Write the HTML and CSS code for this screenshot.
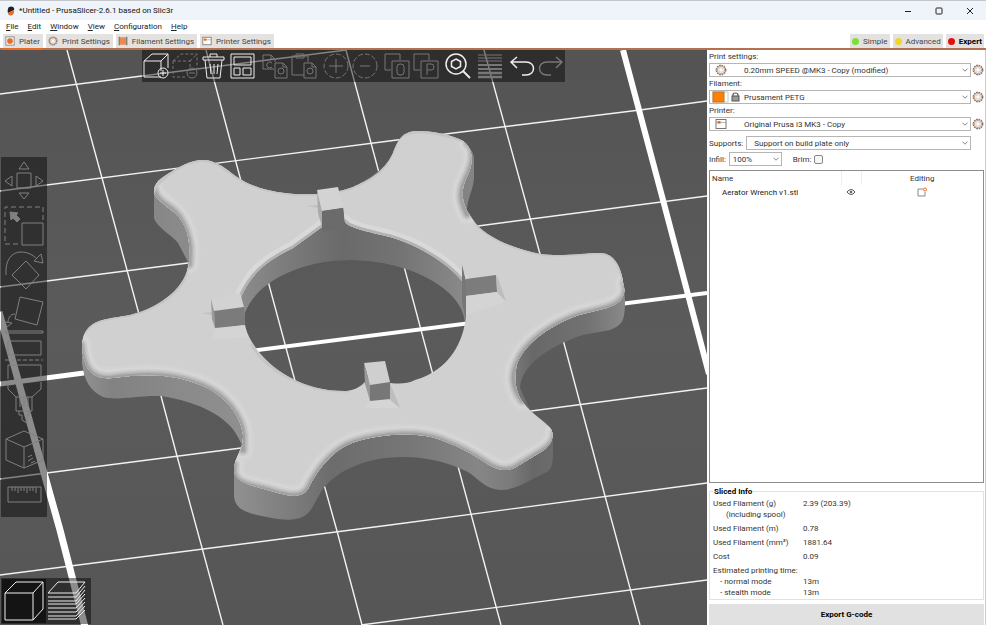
FILE: index.html
```
<!DOCTYPE html>
<html lang="en">
<head>
  <meta charset="UTF-8" />
  <meta name="viewport" content="width=device-width, initial-scale=1" />
  <title>*Untitled - PrusaSlicer-2.6.1 based on Slic3r</title>
  <link rel="stylesheet" href="styles.css">
</head>
<body>

  <!-- shared icons -->
  <svg class="defs" width="0" height="0" aria-hidden="true">
    <symbol id="gear" viewBox="0 0 12 12">
      <circle cx="6" cy="6" r="4.6" fill="none" stroke="#777" stroke-width="1.6" stroke-dasharray="1.7 .7" />
      <circle cx="6" cy="6" r="3.6" fill="#fff" stroke="#d39b74" stroke-width=".9" />
      <circle cx="6" cy="6" r="2.1" fill="#fff" stroke="#aaa" stroke-width=".5" />
    </symbol>
    <symbol id="printer" viewBox="0 0 12 12">
      <rect x="1" y="1.5" width="10" height="9" fill="#fff" stroke="#777" />
      <path d="M1 4.5H11" stroke="#999" stroke-width=".7" />
      <rect x="2.5" y="3" width="3" height="2.6" fill="#ed6b21" />
    </symbol>
    <symbol id="chevron" viewBox="0 0 6 4">
      <path d="M.5 .7L3 3.2L5.500 .7" fill="none" stroke="#666" stroke-width=".8" />
    </symbol>
  </svg>

  <header class="titlebar">
    <svg class="logo" viewBox="0 0 8 10"><path d="M2 1C5-.5 8 1 7 4L1 7C.5 5 .5 2.500 2 1Z" fill="#222" /><path d="M1 7L7 4C7.500 7 6 9.500 3.500 9.500C2 9.500 1 8.500 1 7Z" fill="#ed6b21" /></svg>
    <span class="caption">*Untitled - PrusaSlicer-2.6.1 based on Slic3r</span>
    <div class="window-buttons">
      <button aria-label="Minimize"><svg viewBox="0 0 8 8"><path d="M1 4.500H7" /></svg></button>
      <button aria-label="Maximize"><svg viewBox="0 0 8 8"><rect x="1" y="1" width="6" height="6" rx=".7" /></svg></button>
      <button aria-label="Close"><svg viewBox="0 0 8 8"><path d="M1 1L7 7M7 1L1 7" /></svg></button>
    </div>
  </header>

  <nav class="menu">
    <a href="#"><u>F</u>ile</a>
    <a href="#"><u>E</u>dit</a>
    <a href="#"><u>W</u>indow</a>
    <a href="#"><u>V</u>iew</a>
    <a href="#"><u>C</u>onfiguration</a>
    <a href="#"><u>H</u>elp</a>
  </nav>

  <div class="tabs">
    <button class="tab active">
      <svg viewBox="0 0 12 12"><rect x="1" y="1" width="10" height="10" fill="#eee" stroke="#888" /><circle cx="6" cy="6" r="3.400" fill="#ed6b21" /></svg>
      Plater
    </button>
    <button class="tab"><svg><use href="#gear" /></svg>Print Settings</button>
    <button class="tab">
      <svg viewBox="0 0 12 12"><rect x="2" y="1.500" width="8" height="9" fill="#ed8a50" /><path d="M1.500 1V11M10.500 1V11" stroke="#777" stroke-width="1.500" /></svg>
      Filament Settings
    </button>
    <button class="tab"><svg><use href="#printer" /></svg>Printer Settings</button>
    <div class="modes">
      <button class="tab"><i class="dot green"></i>Simple</button>
      <button class="tab"><i class="dot yellow"></i>Advanced</button>
      <button class="tab current"><i class="dot red"></i>Expert</button>
    </div>
  </div>

  <main>
    <section class="viewport">
      <svg class="scene" viewBox="0 50 707 575" preserveAspectRatio="xMinYMin slice">
        <defs>
          <linearGradient id="bed" x1="0" y1="0" x2="0" y2="1">
            <stop offset="0" stop-color="#545454" /><stop offset=".5" stop-color="#5b5b5b" /><stop offset="1" stop-color="#565656" />
          </linearGradient>
          <linearGradient id="side" gradientUnits="userSpaceOnUse" x1="80" y1="0" x2="626" y2="0">
            <stop offset="0" stop-color="#929292" /><stop offset=".06" stop-color="#828282" />
            <stop offset=".18" stop-color="#8a8a8a" /><stop offset=".29" stop-color="#8f8f8f" />
            <stop offset=".4" stop-color="#7a7a7a" /><stop offset=".46" stop-color="#6c6c6c" />
            <stop offset=".6" stop-color="#767676" /><stop offset=".73" stop-color="#868686" />
            <stop offset=".79" stop-color="#7a7a7a" /><stop offset=".83" stop-color="#686868" />
            <stop offset=".93" stop-color="#727272" /><stop offset="1" stop-color="#8a8a8a" />
          </linearGradient>
          <linearGradient id="bore" gradientUnits="userSpaceOnUse" x1="240" y1="0" x2="466" y2="0">
            <stop offset="0" stop-color="#8c8c8c" /><stop offset=".2" stop-color="#7c7c7c" />
            <stop offset=".45" stop-color="#6a6a6a" /><stop offset=".7" stop-color="#737373" />
            <stop offset="1" stop-color="#8a8a8a" />
          </linearGradient>
          <clipPath id="topClip">
            <path clip-rule="evenodd" d="M200 160C185 162 174 170 163 177C153 184 152 193 157 198C167 208 178 213 183 223C190 236 190 249 189 262C187 286 162 307 130 315C108 319 94 319 86 331C80 340 82 358 87 367C92 376 100 379 112 378C148 373 175 374 203 386C226 396 241 416 243 435C244 450 234 457 234 470C234 480 248 485 260 488C280 493 299 502 308 489C318 468 335 448 355 442C382 433 420 432 441 440C462 448 474 455 486 463C498 471 507 472 516 467L541 452C553 445 555 434 550 428C543 420 537 417 530 410C516 398 513 382 517 364C525 342 553 324 579 315L607 308C622 303 627 295 623 283C621 265 613 253 600 253C584 253 562 257 540 254C512 248 489 238 477 225C463 209 459 195 466 179C474 164 474 149 463 141C450 134 432 131 417 131C402 131 397 142 393 153C384 173 366 181 353 187C333 195 293 198 260 188C235 180 226 166 217 164C211 160 206 160 200 160ZM322 227L293 248C266 261 251 274 241 297L245 327C256 360 295 392 347 391C355 390 362 386 366 381L390 383C400 384 407 384 415 380C450 370 464 341 466 315L465 280L462 281C448 264 421 246 390 237C375 233 350 229 345 222L343 207L322 211Z" />
          </clipPath>
          <!-- lower rims, stroked several times to round the edge -->
          <g id="rims">
            <path d="M154 190C155 198 163 203 170 208C178 213 183 223 186 231C190 243 190 249 189 264" />
            <path d="M81 345C83 370 93 380 112 378C148 373 175 374 203 386C226 396 241 416 243 435V450" />
            <path d="M234 465C230 483 248 485 260 488C280 493 299 502 308 489C318 468 335 448 355 442C382 433 420 432 441 440C462 448 474 455 486 463C498 471 507 472 516 467L541 452C553 445 555 438 555 433" />
            <path d="M522 400C513 388 512 375 517 364C525 342 553 324 579 315L607 308C622 303 629 295 625 283" />
            <path d="M467 214C460 199 460 192 466 179C474 164 476 149 468 143" />
          </g>
        </defs>

        <rect y="50" width="707" height="575" fill="url(#bed)" />

        <!-- print bed grid -->
        <g class="grid">
          <path d="M67 50L102 178L149 351L177 456L223 625" />
          <path d="M206 50L241 181L292 370L337 531L362 625" />
          <path d="M346 50L378 169L432 371L471 514L501 625" />
          <path d="M484 50L540 254L605 496L640 625" />
          <path d="M0 94L346 50" />
          <path d="M0 191L397 140L640 110L707 101" />
          <path d="M0 287L188 263L478 226L707 196" />
          <path d="M0 479L241 448L531 411L707 388" />
          <path d="M0 575L390 525L707 483" />
          <path d="M361 625L707 580" />
        </g>
        <g class="grid-major">
          <path d="M0 384L84 373" stroke-width="5" />
          <path d="M250 351L707 293" stroke-width="4" />
          <path d="M623 50L663 200L709 374" stroke-width="6" />
          <path d="M-1 312L60 530L85 627" stroke-width="7" />
        </g>

        <!-- side walls -->
        <path fill="url(#side)" fill-rule="evenodd" d="M200 160C185 162 174 170 163 177C156 181 154 186 154 194V218C156 227 172 235 178 243L188 262C188 288 162 307 130 315C108 319 94 319 86 331C81 337 82 346 82 363C84 380 90 391 103 397C118 401 138 395 160 396C182 399 210 407 227 423C237 432 239 440 243 447L234 470V497C236 511 250 514 267 517C290 522 304 521 312 508L322 490C335 473 362 457 403 457C431 457 451 464 468 472C481 481 486 489 500 490C515 491 533 478 547 472C554 467 553 460 553 433C550 422 538 419 530 410L520 388C521 364 553 344 583 335L610 330C623 325 625 320 625 300C624 270 616 253 600 253C584 253 562 257 540 254C512 248 489 238 477 225L467 210C467 199 474 188 474 177V158C473 145 456 137 440 134C428 131 404 129 400 138C393 153 390 169 353 187C333 195 293 198 260 188C235 180 226 166 217 164C211 160 206 160 200 160ZM245 312C260 276 310 259 353 260C412 261 462 290 465 321C472 350 450 375 432 380C417 388 400 392 366 391C362 393 355 396 347 396C280 396 240 360 245 312Z" />

        <!-- inside of the bore -->
        <path fill="url(#bore)" d="M322 200L343 200L347 225L390 235L440 260L466 280L465 321C462 290 412 261 353 260C310 259 260 276 245 312L239 297L267 255L310 230Z" />

        <!-- top face with rounded rim -->
        <g clip-path="url(#topClip)">
          <rect x="78" y="125" width="550" height="380" fill="#d0d0d0" />
          <g class="rim">
            <use class="rim-1" href="#rims" />
            <use class="rim-2" href="#rims" />
            <use class="rim-3" href="#rims" />
            <use class="rim-4" href="#rims" />
            <use class="rim-5" href="#rims" />
            <use class="rim-6" href="#rims" />
          </g>
          <path class="bore-rim" d="M345 222C350 229 375 233 390 237C421 246 448 264 462 281M322 227L293 248C266 261 251 274 241 297" />
          <path class="bore-edge" d="M345 222C350 229 375 233 390 237C421 246 448 264 462 281M322 227L293 248C266 261 251 274 241 297" />
          <path class="bore-far" d="M252 345C265 370 305 392 347 391L366 381" />
          <path class="upper-edge" d="M188 262C188 288 162 307 130 315C108 319 94 319 86 331M154 192C154 184 174 170 185 164L200 160C224 160 225 177 260 188C293 198 333 195 353 187C384 175 389 162 397 142C404 126 438 132 463 141M477 225C489 238 512 248 540 254C562 257 584 253 600 253C613 253 621 265 623 283" />
        </g>

        <!-- keys round the bore -->
        <path d="M306 206L318 208V205ZM201 313L212 315V312Z" fill="#c2c2c2" />
        <path d="M317 190L322 210V227L318 213Z" fill="#aaa" />
        <path d="M317 190L338 187L343 208L322 211Z" fill="#d3d3d3" />
        <path d="M322 211L343 208L344 228L322 232Z" fill="#6b6b6b" />
        <path d="M211 299L240 293L244 307L214 311Z" fill="#d2d2d2" />
        <path d="M211 299L214 311L215 328L212 319Z" fill="#999" />
        <path d="M214 311L244 307L245 325L215 328Z" fill="#7b7b7b" />
        <path d="M215 329L245 325L248 337L212 340Z" fill="#d4d4d4" />
        <path d="M462 265L466 281V321L462 303Z" fill="#777" />
        <path d="M466 279L496 275L497 292L466 296Z" fill="#7c7c7c" />
        <path d="M497 275L506 301L497 293Z" fill="#bdbdbd" />
        <path d="M466 296L497 292L505 302L466 315Z" fill="#d4d4d4" />
        <path d="M365 381L370 402L364 408L400 408L390 397V382L366 379Z" fill="#d5d5d5" />
        <path d="M390 383L400 408L389 399Z" fill="#bdbdbd" />
        <path d="M364 363L385 361L390 382L370 385Z" fill="#cfcfcf" />
        <path d="M364 363L370 385V401L365 384Z" fill="#999" />
        <path d="M370 385L390 382V399L370 401Z" fill="#777" />
      </svg>

      <div class="toolbar">
        <div class="group">
          <button aria-label="Add"><svg viewBox="0 0 26 26"><path d="M1 8V24H18M1 8H18V18M1 8L9 1H25V15M18 8L25 1" /><circle cx="20" cy="20" r="5" /><path d="M20 17V23M17 20H23" /></svg></button>
          <button aria-label="Delete" disabled><svg viewBox="0 0 26 26"><path stroke-dasharray="3 2" d="M1 8V24H15M1 8H18V15M1 8L9 1H25V15M18 8L25 1" /><circle cx="20" cy="20" r="5" /><path d="M17 20H23" /></svg></button>
          <button aria-label="Delete all"><svg viewBox="0 0 26 26"><path d="M2 4H23V7H2ZM9 4V1H16V4M4 7L6 25H19L21 7M9 11L10 21M13 11V21M17 11L16 21" /></svg></button>
          <button aria-label="Arrange"><svg viewBox="0 0 26 26"><path d="M1 1H24V25H1ZM4 4H21V12H4ZM4 15H10V22H4ZM13 15H21V22H13Z" /></svg></button>
        </div>
        <div class="group">
          <button aria-label="Copy" disabled><svg viewBox="0 0 26 26"><path d="M12 16H1V2H9L13 6V9M9 2V6H13M13 10H21L25 14V25H13ZM21 10V14H25" /><circle cx="19" cy="18" r="3" /><path d="M10 10A3 3 0 1 0 10 14" /></svg></button>
          <button aria-label="Paste" disabled><svg viewBox="0 0 26 26"><path d="M13 22H1V3H17V9M5 3V1H13V5H5ZM13 10H21L25 14V25H13ZM21 10V14H25" /><circle cx="19" cy="18" r="3" /></svg></button>
        </div>
        <div class="group">
          <button aria-label="Add instance" disabled><svg viewBox="0 0 26 26"><circle cx="13" cy="13" r="12" stroke-dasharray="5 2" /><path d="M13 6V20M6 13H20" /></svg></button>
          <button aria-label="Remove instance" disabled><svg viewBox="0 0 26 26"><circle cx="13" cy="13" r="12" stroke-dasharray="5 2" /><path d="M8 13H18" /></svg></button>
        </div>
        <div class="group">
          <button aria-label="Split to objects" disabled><svg viewBox="0 0 26 26"><path d="M7 17H1V1H16V7M8 8H25V25H8Z" /><rect x="13" y="11" width="7" height="11" rx="3" /></svg></button>
          <button aria-label="Split to parts" disabled><svg viewBox="0 0 26 26"><path d="M7 17H1V1H16V7M8 8H25V25H8ZM14 22V11H18Q21 11 21 14T18 17H14" /></svg></button>
        </div>
        <div class="group">
          <button aria-label="Search"><svg viewBox="0 0 26 26"><circle cx="11" cy="11" r="10" stroke-width="1.500" /><path d="M11 6L15.500 8.500V13.500L11 16L6.500 13.500V8.500Z" stroke-width="1.500" /><path d="M18 18L25 25" stroke-width="2" /></svg></button>
        </div>
        <div class="group">
          <button aria-label="Variable layer height" disabled><svg viewBox="0 0 26 26"><path d="M1 2H25M1 5H25M1 8H25" /><path d="M1 12H25M1 16H25" stroke-width="2" /><path d="M1 20H25M1 24H25" stroke-width="2.500" /></svg></button>
        </div>
        <div class="group">
          <button aria-label="Undo"><svg viewBox="0 0 26 26"><path stroke-width="1.500" d="M8 4L2 9L8 15M2 9H17C27 9 27 22 17 22H13" /></svg></button>
          <button aria-label="Redo" disabled><svg viewBox="0 0 26 26"><path stroke-width="1.500" d="M18 4L24 9L18 15M24 9H9C-1 9-1 22 9 22H13" /></svg></button>
        </div>
      </div>

      <div class="gizmos">
        <button aria-label="Move"><svg viewBox="0 0 46 45"><path d="M23 5L28 12H18ZM4 24L11 19V29ZM16 16H30V31H16ZM42 24L35 19V29ZM23 42L18 36H28Z" /></svg></button>
        <button aria-label="Scale"><svg viewBox="0 0 46 45"><path stroke-dasharray="5 3" d="M42 18V5H4V42H19" /><path d="M21 21H42V43H21Z" /><path class="solid" d="M9 10L17 11L15 13L19 17L16 20L12 16L10 18Z" /></svg></button>
        <button aria-label="Rotate"><svg viewBox="0 0 46 45"><path d="M5 28C4 14 10 5 20 5C27 5 32 8 36 12M33 14L40 7L42 16ZM11 28L25 14L38 28L25 42Z" /></svg></button>
        <button aria-label="Place on face"><svg viewBox="0 0 46 45"><path d="M19 5L42 10L36 33L14 27ZM14 22C9 22 7 27 7 30M4 30L11 31L6 35ZM4 39H42V41H4Z" /></svg></button>
        <button aria-label="Cut"><svg viewBox="0 0 46 45"><path d="M7 4H40V18H7ZM7 42V28H40V42" /><path stroke-dasharray="4 2" d="M4 23H42" /></svg></button>
        <button aria-label="Paint-on supports"><svg viewBox="0 0 46 45"><path d="M7 0V7L15 15H31L40 7V0M15 15V29H31V15M19 15V25M23 15V25M27 15V25M18 29V33H21V38L26 41V33H28V29" /></svg></button>
        <button aria-label="Seam painting"><svg viewBox="0 0 46 45"><path d="M23 4L42 12V33L23 41L5 33V12ZM5 12L23 20L42 12M23 20V41M27 30L31 28M27 34L32 31M30 36L34 34M33 25L34 24" /></svg></button>
        <button aria-label="Measure"><svg viewBox="0 0 46 45"><path d="M7 15H40V30H7ZM11 15V19M14 15V19M17 15V21M20 15V19M23 15V19M26 15V21M29 15V19M32 15V19M35 15V21" /></svg></button>
      </div>

      <div class="views">
        <button class="active" aria-label="3D editor view"><svg viewBox="0 0 44 44"><path d="M3 14H31V41H3ZM3 14L14 3H41V30L31 41M31 14L41 3" /></svg></button>
        <button aria-label="Preview"><svg viewBox="0 0 44 44"><path d="M2 14L12 3H39L30 14ZM2 18H30L39 7M2 22H30L39 11M2 25H30L39 15M2 29H30L39 19M2 33H30L39 23M2 37H30L39 27M2 40H30L39 31" /></svg></button>
      </div>
    </section>

    <aside class="sidebar">
      <label for="print">Print settings:</label>
      <div class="preset">
        <div class="combo">
          <select id="print"><option>0.20mm SPEED @MK3 - Copy (modified)</option></select>
          <svg class="combo-icon"><use href="#gear" /></svg>
          <svg class="arrow"><use href="#chevron" /></svg>
        </div>
        <button class="edit" aria-label="Edit print preset"><svg><use href="#gear" /></svg></button>
      </div>

      <label for="filament">Filament:</label>
      <div class="preset">
        <div class="combo">
          <select id="filament"><option>Prusament PETG</option></select>
          <svg class="combo-filament" viewBox="0 0 28 12">
            <rect x="1" y="1" width="15" height="10" fill="#fff" stroke="#ccc" /><rect x="1" y="1" width="11" height="10" fill="#ff8000" stroke="#b87434" />
            <path d="M21 6V4Q21 2 23.500 2T26 4V6" fill="none" stroke="#555" stroke-width="1.200" /><rect x="20" y="5" width="7" height="5" fill="#999" stroke="#555" />
          </svg>
          <svg class="arrow"><use href="#chevron" /></svg>
        </div>
        <button class="edit" aria-label="Edit filament preset"><svg><use href="#gear" /></svg></button>
      </div>

      <label for="printer-preset">Printer:</label>
      <div class="preset">
        <div class="combo">
          <select id="printer-preset"><option>Original Prusa i3 MK3 - Copy</option></select>
          <svg class="combo-icon"><use href="#printer" /></svg>
          <svg class="arrow"><use href="#chevron" /></svg>
        </div>
        <button class="edit" aria-label="Edit printer preset"><svg><use href="#gear" /></svg></button>
      </div>

      <div class="row supports">
        <label for="supports">Supports:</label>
        <div class="combo">
          <select id="supports"><option>Support on build plate only</option></select>
          <svg class="arrow"><use href="#chevron" /></svg>
        </div>
      </div>

      <div class="row">
        <label for="infill">Infill:</label>
        <div class="combo small">
          <select id="infill"><option>100%</option></select>
          <svg class="arrow"><use href="#chevron" /></svg>
        </div>
        <label class="brim" for="brim">Brim:</label>
        <input type="checkbox" id="brim">
      </div>

      <div class="objects">
        <table>
          <thead>
            <tr><th>Name</th><th class="eye"></th><th class="editing">Editing</th></tr>
          </thead>
          <tbody>
            <tr>
              <td class="object">Aerator Wrench v1.stl</td>
              <td class="eye"><svg viewBox="0 0 10 8"><path d="M1 4Q5-1 9 4Q5 9 1 4Z" fill="none" stroke="#555" /><circle cx="5" cy="4" r="1.300" fill="#666" /></svg></td>
              <td class="editing"><svg viewBox="0 0 10 10"><path d="M6 2H1V9H8V5" fill="none" stroke="#888" /><circle cx="8" cy="2.500" r="1.500" fill="#fff" stroke="#ed6b21" /></svg></td>
            </tr>
          </tbody>
        </table>
      </div>

      <fieldset class="sliced">
        <legend>Sliced Info</legend>
        <table>
          <tr class="item"><td>Used Filament (g)</td><td>2.39 (203.39)</td></tr>
          <tr><td class="spool">(including spool)</td><td></td></tr>
          <tr class="item"><td>Used Filament (m)</td><td>0.78</td></tr>
          <tr class="item"><td>Used Filament (mm³)</td><td>1881.64</td></tr>
          <tr class="item"><td>Cost</td><td>0.09</td></tr>
          <tr class="item"><td>Estimated printing time:</td><td></td></tr>
          <tr><td class="mode">- normal mode</td><td>13m</td></tr>
          <tr><td class="mode">- stealth mode</td><td>13m</td></tr>
        </table>
      </fieldset>

      <button class="export">Export G-code</button>
    </aside>
  </main>

</body>
</html>
```
FILE: styles.css
```
* {
  box-sizing: border-box;
}

body {
  margin: 0;
  height: 100vh;
  display: flex;
  flex-direction: column;
  overflow: hidden;
  background: #fff;
  color: #333;
  font-family: Roboto, "Open Sans", sans-serif;
  font-size: 8px;
  line-height: 11px;
}

button, select, input {
  font: inherit;
  color: inherit;
  margin: 0;
  padding: 0;
  border: none;
  border-radius: 0;
  background: none;
}

svg {
  display: block;
  flex: none;
}

.defs {
  position: absolute;
}

/* title bar and menu */
.titlebar {
  flex: none;
  display: flex;
  align-items: center;
  height: 20px;
  padding: 0 1px 0 7px;
  background: #eff3fa;
  border-top: 1px solid #c4c6ca;
  color: #111;
}

.logo {
  width: 8px;
  height: 10px;
  margin-right: 4px;
}

.window-buttons {
  display: flex;
  margin-left: auto;
}

.window-buttons button {
  display: flex;
  justify-content: center;
  width: 31px;
}

.window-buttons svg {
  width: 8px;
  height: 8px;
  fill: none;
  stroke: #222;
}

.menu {
  flex: none;
  display: flex;
  gap: 9px;
  height: 14px;
  padding: 1px 6px;
}

.menu a {
  color: #222;
  text-decoration: none;
}

/* tabs */
.tabs {
  flex: none;
  display: flex;
  gap: 3px;
  height: 16px;
  padding: 0 2px 0 3px;
  border-bottom: 2px solid #b5714f;
}

.tab {
  display: flex;
  align-items: center;
  gap: 4px;
  height: 14px;
  padding: 0 3px 0 2px;
  background: #e4e2e1;
  color: #444;
}

.tab.active {
  height: 16px;
  border-bottom: 2px solid #ed6b21;
}

.tab svg {
  width: 10px;
  height: 10px;
}

.tab.current {
  color: #000;
  font-weight: bold;
}

.modes {
  display: flex;
  gap: 3px;
  margin-left: auto;
}

.modes .tab {
  padding: 0 2px;
}

.dot {
  width: 7px;
  height: 7px;
  border-radius: 50%;
}

.green { background: #7ddf3c; }
.yellow { background: #f0d52c; }
.red { background: #e0100c; }

main {
  flex: 1;
  display: flex;
  min-height: 0;
}

/* 3D view */
.viewport {
  flex: 1;
  position: relative;
  overflow: hidden;
  background: #575757;
}

.scene {
  width: 100%;
  height: 100%;
}

.grid path {
  fill: none;
  stroke: #f2f2f2;
  stroke-width: 1.4;
}

.grid-major path {
  fill: none;
  stroke: #fff;
}

.rim, .bore-rim, .bore-edge, .bore-far, .upper-edge {
  fill: none;
  stroke-linecap: round;
}

.rim-1 { stroke: #d3d3d3; stroke-width: 22px; }
.rim-2 { stroke: #d7d7d7; stroke-width: 17px; }
.rim-3 { stroke: #cfcfcf; stroke-width: 13px; }
.rim-4 { stroke: #c3c3c3; stroke-width: 10px; }
.rim-5 { stroke: #b3b3b3; stroke-width: 7px; }
.rim-6 { stroke: #a1a1a1; stroke-width: 4px; }

.bore-rim {
  stroke: #d9d9d9;
  stroke-width: 14px;
}

.bore-edge {
  stroke: #b2b2b2;
  stroke-width: 5px;
}

.bore-far, .upper-edge {
  stroke: #c5c5c5;
  stroke-width: 3px;
}

.toolbar, .gizmos, .views {
  position: absolute;
  display: flex;
  background: rgba(0, 0, 0, 0.45);
}

.toolbar {
  top: 0;
  left: 142px;
  gap: 6px;
  padding: 3px 1px;
}

.group {
  display: flex;
  gap: 3px;
}

.toolbar svg {
  width: 26px;
  height: 26px;
}

.toolbar svg, .gizmos svg, .views svg {
  fill: none;
  stroke: #eee;
}

.toolbar button:disabled svg {
  stroke: #777;
}

.gizmos {
  top: 107px;
  left: 1px;
  flex-direction: column;
}

.gizmos svg {
  width: 46px;
  height: 45px;
  stroke: #808080;
}

.gizmos .solid {
  fill: #808080;
}

.views {
  bottom: 1px;
  left: 1px;
  padding: 1px;
}

.views svg {
  width: 44px;
  height: 44px;
}

.views .active {
  background: #141414;
}

/* sidebar */
.sidebar {
  flex: none;
  display: flex;
  flex-direction: column;
  width: 279px;
  padding: 0 1px 0 2px;
  border-right: 1px solid #ccc;
}

.sidebar > label {
  height: 13px;
  line-height: 13px;
}

.preset, .row {
  display: flex;
  align-items: center;
}

.combo {
  flex: 1;
  position: relative;
}

.combo select {
  display: block;
  width: 100%;
  height: 14px;
  padding-left: 34px;
  border: 1px solid #b5b5b5;
  background: #fff;
  appearance: none;
}

.combo .arrow {
  position: absolute;
  top: 5px;
  right: 3px;
  width: 6px;
  height: 4px;
}

.combo-icon, .combo-filament {
  position: absolute;
  top: 1px;
}

.combo-icon {
  left: 6px;
  width: 12px;
  height: 12px;
}

.combo-filament {
  left: 3px;
  width: 28px;
  height: 12px;
}

.edit svg {
  width: 12px;
  height: 12px;
  margin-left: 1px;
}

.row {
  gap: 3px;
  height: 14px;
  margin-top: 2px;
}

.supports {
  margin-top: 5px;
  padding-right: 13px;
}

.row select {
  padding-left: 7px;
}

.combo.small {
  flex: none;
  width: 53px;
}

.small select {
  padding-left: 3px;
}

.brim {
  margin-left: 8px;
}

.row input {
  width: 9px;
  height: 9px;
  border: 1px solid #888;
  border-radius: 2px;
  background: #f6f6f6;
  appearance: none;
}

.objects {
  flex: 1;
  margin-top: 4px;
  border: 1px solid #8c8c8c;
}

.objects table {
  width: 100%;
  border-collapse: collapse;
}

.objects th, .objects td {
  height: 14px;
  padding: 0 2px;
  text-align: left;
  font-weight: normal;
}

.objects .object {
  padding-left: 12px;
  color: #222;
}

.objects .eye {
  width: 20px;
  padding: 0 5px;
}

.objects th.eye {
  border: solid #eee;
  border-width: 0 1px;
}

.objects .editing {
  width: 122px;
  text-align: center;
}

.eye svg {
  width: 10px;
  height: 8px;
}

.editing svg {
  width: 10px;
  height: 10px;
  margin: 0 auto;
}

.sliced {
  margin: 3px 0 4px;
  padding: 0 3px 1px;
  border: 1px solid #e2e2e2;
}

.sliced legend {
  padding: 0 1px;
  color: #000;
  font-weight: bold;
}

.sliced table {
  border-collapse: collapse;
}

.sliced td {
  height: 11px;
  padding: 0;
}

.sliced td:first-child {
  width: 90px;
}

.sliced .item td {
  height: 14px;
  padding-top: 3px;
}

.sliced .item:first-child td {
  height: 12px;
  padding-top: 1px;
}

.sliced .spool {
  padding-left: 13px;
}

.sliced .mode {
  padding-left: 7px;
}

.export {
  height: 21px;
  background: #e1e1e1;
  color: #000;
  font-weight: bold;
}
```
